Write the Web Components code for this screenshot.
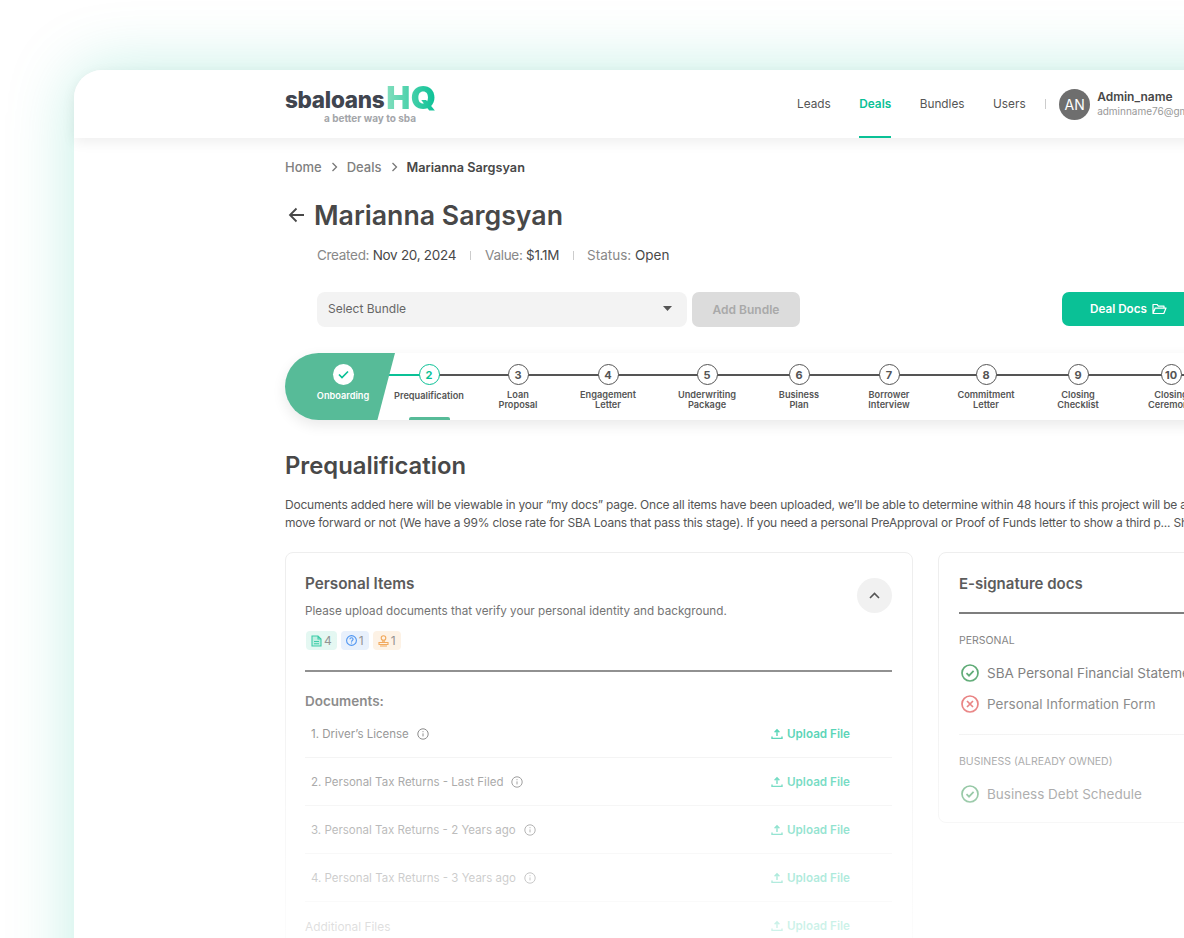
<!DOCTYPE html>
<html>
<head>
<meta charset="utf-8">
<title>Deal</title>
<style>
html,body{margin:0;height:938px;overflow:hidden;background:#fff;font-family:Inter,"Liberation Sans",sans-serif;color:#484848}
</style>
</head>
<body>
<deal-shell>
  <site-header></site-header>
  <crumb-bar></crumb-bar>
  <deal-title>Marianna Sargsyan</deal-title>
  <deal-meta></deal-meta>
  <deal-toolbar></deal-toolbar>
  <deal-stepper>
    <step-onboarding></step-onboarding>
    <deal-step n="2" w="89" active>Prequalification</deal-step>
    <deal-step n="3" w="90">Loan<br>Proposal</deal-step>
    <deal-step n="4" w="99">Engagement<br>Letter</deal-step>
    <deal-step n="5" w="92">Underwriting<br>Package</deal-step>
    <deal-step n="6" w="90">Business<br>Plan</deal-step>
    <deal-step n="7" w="97">Borrower<br>Interview</deal-step>
    <deal-step n="8" w="92">Commitment<br>Letter</deal-step>
    <deal-step n="9" w="93">Closing<br>Checklist</deal-step>
    <deal-step n="10" w="93">Closing<br>Ceremony</deal-step>
  </deal-stepper>
  <stage-intro></stage-intro>
  <deal-columns>
    <items-card>
      <doc-row>1. Driver’s License</doc-row>
      <doc-row>2. Personal Tax Returns - Last Filed</doc-row>
      <doc-row>3. Personal Tax Returns - 2 Years ago</doc-row>
      <doc-row>4. Personal Tax Returns - 3 Years ago</doc-row>
      <doc-row extra>Additional Files</doc-row>
    </items-card>
    <esign-card>
      <sign-group>PERSONAL</sign-group>
      <sign-item state="ok">SBA Personal Financial Statement</sign-item>
      <sign-item state="bad">Personal Information Form</sign-item>
      <sign-rule></sign-rule>
      <sign-group>BUSINESS (ALREADY OWNED)</sign-group>
      <sign-item state="ok">Business Debt Schedule</sign-item>
    </esign-card>
  </deal-columns>
</deal-shell>

<script>
const ui = (name, css, html, setup) => {
  customElements.define(name, class extends HTMLElement{
    constructor(){
      super();
      const root = this.attachShadow({mode: 'open'});
      root.innerHTML = `<style>${css}</style>${html}`;
    }
    connectedCallback(){
      if(setup) setup(this, this.shadowRoot);
    }
  });
};

const infoIcon = `<svg width="12" height="12" viewBox="0 0 12 12" fill="none" stroke="#555" stroke-width="1"><circle cx="6" cy="6" r="5.2"/><path d="M6 5.4v3M6 3.2v1" /></svg>`;
const uploadIcon = `<svg width="12" height="12" viewBox="0 0 12 12" fill="none" stroke="#0ac196" stroke-width="1.4"><path d="M6 8V2M3.6 4.2 6 1.8l2.4 2.4M1 8.4v2h10v-2"/></svg>`;

ui('deal-shell', `
  :host{display:block;box-sizing:border-box;position:relative;width:1300px;height:1000px;margin:70px 0 0 74px;background:#fff;border-radius:28px 0 0 0;box-shadow:0 0 66px rgba(10,193,150,.25)}
  .fade{position:absolute;left:0;right:0;top:530px;height:338px;pointer-events:none;background:linear-gradient(rgba(255,255,255,0),rgba(255,255,255,.82))}
`, `<slot></slot><div class="fade"></div>`);

ui('site-header', `
  :host{display:flex;align-items:center;height:68px;padding-left:211px;background:#fff;border-radius:28px 0 0 0;box-shadow:0 4px 14px rgba(0,0,0,.07);position:relative}
  .logo{width:152px;margin-top:-4px;display:flex;flex-direction:column;align-items:flex-start}
  .mark{display:flex;align-items:flex-end;height:32px;line-height:1}
  .sba{font-size:22.5px;font-weight:800;letter-spacing:-.3px;color:#40454f;margin-bottom:2px}
  .hq{font-size:32px;font-weight:900;margin-left:2px;background:linear-gradient(90deg,#84dfbe,#0ac196);-webkit-background-clip:text;background-clip:text;color:transparent;letter-spacing:.4px}
  .tag{font-size:10px;font-weight:700;color:#a4a6aa;line-height:10px;margin:-1px 0 0 39px}
  nav{display:flex;align-self:stretch;align-items:center;margin-left:360px;gap:28.5px;font-size:11.8px;color:#555}
  nav a{position:relative;line-height:68px;font-weight:400}
  nav a.on{color:#0ac196;font-weight:600}
  nav a.on::after{content:"";position:absolute;left:0;right:0;bottom:0;height:2px;background:#0ac196}
  .sep{width:1px;height:10px;background:#ccc;margin:0 13px 0 19.5px}
  .av{width:31px;height:31px;border-radius:50%;background:#6e6e6e;color:#fff;font-size:14px;display:flex;align-items:center;justify-content:center;margin-right:7px}
  .who{display:flex;flex-direction:column;line-height:15px}
  .who b{font-size:12px;font-weight:600;color:#484848}
  .who span{font-size:10px;color:#999}
`, `
  <div class="logo">
    <div class="mark"><span class="sba">sbaloans</span><span class="hq">HQ</span></div>
    <div class="tag">a better way to sba</div>
  </div>
  <nav><a>Leads</a><a class="on">Deals</a><a>Bundles</a><a>Users</a></nav>
  <div class="sep"></div>
  <div class="av">AN</div>
  <div class="who"><b>Admin_name</b><span>adminname76@gmail.com</span></div>
`);

ui('crumb-bar', `
  :host{display:flex;align-items:center;height:16px;margin:21px 0 0 211px;font-size:13px;font-weight:500;color:#808080}
  svg{margin:0 9px}
  b{font-weight:600;font-size:12.7px;color:#484848}
`, `Home<svg width="7" height="10" viewBox="0 0 7 10" fill="none" stroke="#777" stroke-width="1.3"><path d="M1.5 1 5.5 5l-4 4"/></svg>Deals<svg width="7" height="10" viewBox="0 0 7 10" fill="none" stroke="#777" stroke-width="1.3"><path d="M1.5 1 5.5 5l-4 4"/></svg><b>Marianna Sargsyan</b>`);

ui('deal-title', `
  :host{display:flex;align-items:center;height:36px;margin:22px 0 0 214px;font-size:26.7px;font-weight:600;color:#484848}
  svg{margin-right:9px}
`, `<svg width="17" height="16" viewBox="0 0 17 16" fill="none" stroke="#484848" stroke-width="1.8"><path d="M16 8H2M8.5 1.5 2 8l6.5 6.5"/></svg><slot></slot>`);

ui('deal-meta', `
  :host{display:flex;align-items:center;height:20px;margin:12px 0 0 243px;font-size:13.5px;letter-spacing:-.3px;color:#888}
  b{font-weight:400;color:#484848}
  i{width:1px;height:9px;background:#ccc;margin:0 14px}
  .last{letter-spacing:0;margin-left:-1px}
`, `<span>Created: <b>Nov 20, 2024</b></span><i></i><span>Value: <b>$1.1M</b></span><i></i><span class="last">Status: <b>Open</b></span>`);

ui('deal-toolbar', `
  :host{display:flex;align-items:flex-start;box-sizing:border-box;width:1120px;height:35px;margin:27px 0 0 243px;font-size:12px}
  .sel{box-sizing:border-box;width:370px;height:35px;background:#f3f3f3;border-radius:8px;padding:0 15px 2px 11px;display:flex;align-items:center;justify-content:space-between;color:#666}
  .sel svg{display:block}
  .add{box-sizing:border-box;width:108px;height:35px;margin-left:5px;background:#dcdcdc;border-radius:7px;color:#a9a9a9;font-weight:600;display:flex;align-items:center;justify-content:center}
  .docs{box-sizing:border-box;height:34px;width:132px;margin-left:262px;background:#0ac196;border-radius:7px;color:#fff;font-size:11.7px;font-weight:600;padding-left:28px;display:flex;align-items:center;gap:5px}
`, `
  <div class="sel">Select Bundle<svg width="9" height="5" viewBox="0 0 9 5"><path d="M0 0h9L4.5 5z" fill="#555"/></svg></div>
  <div class="add">Add Bundle</div>
  <div class="docs">Deal Docs<svg width="15" height="12" viewBox="0 0 15 12" fill="none" stroke="#fff" stroke-width="1.2" stroke-linejoin="round"><path d="M1 10.5V1.5h4l1.4 1.6H12v2M1 10.5h10.8L14 5.1H3.2z"/></svg></div>
`);

ui('deal-stepper', `
  :host{display:flex;box-sizing:border-box;height:67px;width:935px;margin:26px 0 0 211px;background:#fff;border-radius:34px 0 0 34px;box-shadow:0 5px 14px rgba(0,0,0,.09)}
`, `<slot></slot>`);

ui('step-onboarding', `
  :host{display:flex;flex:none;position:relative;z-index:2;flex-direction:column;align-items:center;box-sizing:border-box;width:110px;height:67px;margin-right:34px;padding:11px 0 0 6px;background:#57bb98;color:#fff;border-radius:34px 0 0 34px;clip-path:polygon(0 0,100% 0,84% 100%,0 100%);font-size:9.2px;font-weight:600}
  .tick{width:21px;height:21px;border-radius:50%;background:#fff;display:flex;align-items:center;justify-content:center;margin-bottom:5px}
`, `<div class="tick"><svg width="11" height="9" viewBox="0 0 11 9" fill="none" stroke="#0ac196" stroke-width="1.7"><path d="M1 4.5 4 7.5 10 1.5"/></svg></div>Onboarding`);

// each step box runs from its circle's centre to the next circle's centre
ui('deal-step', `
  :host{display:block;flex:none;position:relative;height:67px;font-size:9.2px;font-weight:600;line-height:10px;color:#555;white-space:nowrap}
  :host::before{content:"";position:absolute;left:0;right:0;top:21px;height:1.5px;background:#555}
  .in{position:relative;width:100px;margin-left:-50px;padding-top:11px;text-align:center}
  .n{box-sizing:border-box;width:21px;height:21px;margin:0 auto 5px;border-radius:50%;border:1.5px solid #555;background:#fff;color:#555;font-size:11px;font-weight:700;display:flex;align-items:center;justify-content:center}
  .lead{position:absolute;left:-42px;width:42px;top:21px;height:1.5px;background:#0ac196;display:none}
  .bar{position:absolute;left:-20px;bottom:0;width:41px;height:3px;border-radius:2px 2px 0 0;background:#57bb98;display:none}
  :host([active]) .n{border-color:#0ac196;color:#0ac196}
  :host([active]) .lead,:host([active]) .bar{display:block}
  :host([active]) .txt{padding-top:1px}
`, `<div class="lead"></div><div class="in"><div class="n"></div><div class="txt"><slot></slot></div></div><div class="bar"></div>`, (el, root) => {
  root.querySelector('.n').textContent = el.getAttribute('n');
  el.style.width = el.getAttribute('w') + 'px';
});

ui('stage-intro', `
  :host{display:block;margin:28px 0 0 211px;width:1100px}
  h2{margin:0;font-size:23.8px;line-height:36px;font-weight:600;color:#484848}
  p{margin:12px 0 0;font-size:12px;letter-spacing:-.22px;line-height:18px;color:#555;white-space:nowrap}
`, `
  <h2>Prequalification</h2>
  <p>Documents added here will be viewable in your “my docs” page. Once all items have been uploaded, we’ll be able to determine within 48 hours if this project will be able to<br>move forward or not (We have a 99% close rate for SBA Loans that pass this stage). If you need a personal PreApproval or Proof of Funds letter to show a third p... Show more</p>
`);

ui('deal-columns', `
  :host{display:flex;align-items:flex-start;gap:25px;margin:20px 0 0 211px}
`, `<slot></slot>`);

ui('items-card', `
  :host{display:block;box-sizing:border-box;width:628px;flex:none;border:1.5px solid #eee;border-radius:8px;padding:21px 20px 0 19px;color:#555;position:relative}
  h3{margin:0;font-size:15.3px;line-height:20px;font-weight:600;color:#5c5c5c}
  .sub{font-size:11.7px;line-height:16px;margin-top:9px;color:#707070}
  .toggle{position:absolute;right:20px;top:25px;width:35px;height:35px;border-radius:50%;background:#f1f1f1;display:flex;align-items:center;justify-content:center}
  .tags{display:flex;gap:4px;margin:12px 0 0 1px}
  .tag{display:flex;align-items:center;gap:2px;height:19px;border-radius:4px;padding:0 5px;font-size:12px;color:#888}
  .t1{background:#e2f7f1}.t2{background:#e6effc}.t3{background:#fdf1e3}
  hr{border:0;height:2px;background:#7a7a7a;margin:20px 0 0}
  h4{margin:20px 0 0;font-size:13.5px;line-height:18px;font-weight:600;color:#666}
`, `
  <h3>Personal Items</h3>
  <div class="sub">Please upload documents that verify your personal identity and background.</div>
  <div class="toggle"><svg width="11" height="7" viewBox="0 0 11 7" fill="none" stroke="#555" stroke-width="1.6"><path d="M1 6 5.5 1.500 10 6"/></svg></div>
  <div class="tags">
    <div class="tag t1"><svg width="11" height="12" viewBox="0 0 11 12" fill="#b9eedf" stroke="#29c79f" stroke-width="1.1"><path d="M1 1h6l3 3v7H1zM7 1v3h3M3 6.500h5M3 8.800h5"/></svg>4</div>
    <div class="tag t2"><svg width="11" height="11" viewBox="0 0 11 11" fill="none" stroke="#3d8bf0" stroke-width="1.1"><circle cx="5.500" cy="5.500" r="4.900"/><path d="M3.900 4.300c0-2 3.200-2 3.200 0 0 1.200-1.600 1.200-1.600 2.400M5.500 7.500v1"/></svg>1</div>
    <div class="tag t3"><svg width="11" height="12" viewBox="0 0 11 12" fill="none" stroke="#f0a04b" stroke-width="1.1"><circle cx="5.500" cy="3" r="2.300"/><path d="M4.800 5.300v2M6.200 5.300v2M1 7.500h9v2H1zM2 11h7"/></svg>1</div>
  </div>
  <hr>
  <h4>Documents:</h4>
  <slot></slot>
`);

ui('doc-row', `
  :host{display:flex;align-items:center;box-sizing:border-box;height:48px;padding:0 42px 0 6px;border-bottom:1px solid #eee;font-size:11.5px;color:#666}
  :host([extra]){padding-left:0;border-bottom:0;font-size:11.9px}
  :host([extra]) .i{display:none}
  .i{display:flex;margin-left:8px}
  .up{margin-left:auto;display:flex;align-items:center;gap:4px;font-size:11.7px;font-weight:600;color:#0ac196}
`, `<slot></slot><span class="i">${infoIcon}</span><span class="up">${uploadIcon}Upload File</span>`);

ui('esign-card', `
  :host{display:block;box-sizing:border-box;width:400px;height:271px;flex:none;border:1.5px solid #eee;border-radius:8px;padding:21px 20px 0;color:#555}
  h3{margin:0;font-size:15px;line-height:20px;font-weight:600;color:#5c5c5c}
  hr{border:0;height:2px;background:#7a7a7a;margin:18px 0 0}
`, `<h3>E-signature docs</h3><hr><slot></slot>`);

ui('sign-group', `
  :host{display:block;font-size:10.5px;line-height:14px;color:#777;margin-top:20px;margin-bottom:9px}
`, `<slot></slot>`);

ui('sign-rule', `
  :host{display:block;height:1px;background:#eee;margin-top:15px}
`, ``);

ui('sign-item', `
  :host{display:flex;align-items:center;gap:8px;height:31px;padding-left:2px;font-size:13.5px;color:#666;white-space:nowrap}
  svg{flex:none}
`, `<span class="ic"></span><slot></slot>`, (el, root) => {
  const ok = el.getAttribute('state') === 'ok';
  const color = ok ? '#3f9a5b' : '#e25c5c';
  const mark = ok ? 'M5.500 9.200 8 11.700 12.600 6.800' : 'M6 6l6 6M12 6l-6 6';
  const span = root.querySelector('.ic');
  span.style.display = 'flex';
  span.innerHTML = `<svg width="18" height="18" viewBox="0 0 18 18" fill="none" stroke="${color}" stroke-width="1.7"><circle cx="9" cy="9" r="8"/><path d="${mark}"/></svg>`;
});
</script>
</body>
</html>
